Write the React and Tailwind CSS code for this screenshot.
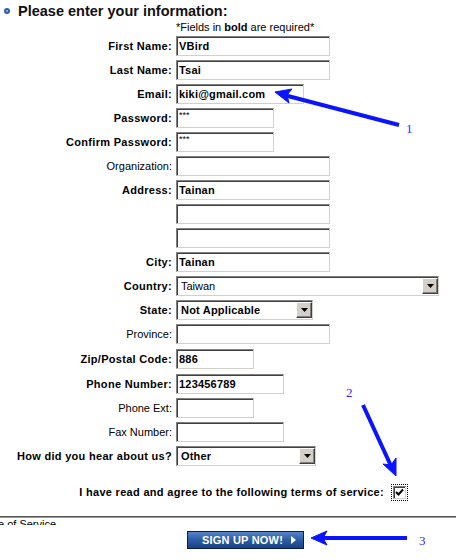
import React from 'react';

const inputBox =
  'h-[20px] border border-t-[#808080] border-l-[#808080] border-b-[#d4d0c8] border-r-[#d4d0c8] shadow-[inset_1px_1px_0_#404040] bg-white flex items-center overflow-hidden';

const Field = ({ w, value, bold = true, small = false }) => (
  <div className={`${inputBox} ${w}`}>
    {value && (
      <span
        className={`pl-[2px] text-black ${bold ? 'font-bold tracking-[0.2px]' : ''} ${small ? 'text-[9px] self-start leading-[12px]' : 'text-[11px]'}`}
      >
        {value}
      </span>
    )}
  </div>
);

const Select = ({ w, value, bold = true }) => (
  <div className={`${inputBox} ${w} justify-between`}>
    <span className={`pl-[4px] text-[11px] text-black ${bold ? 'font-bold tracking-[0.2px]' : ''}`}>{value}</span>
    <div className="w-[16px] h-[16px] bg-[#d4d0c8] border border-t-[#ffffff] border-l-[#ffffff] border-b-[#404040] border-r-[#404040] shadow-[inset_-1px_-1px_0_#808080] flex items-center justify-center">
      <svg width="7" height="4" viewBox="0 0 7 4">
        <polygon points="0,0 7,0 3.5,4" fill="#000" />
      </svg>
    </div>
  </div>
);

const Row = ({ label, bold = true, tall = false, children }) => (
  <div className={`flex items-center ${tall ? 'h-[26px]' : 'h-[24px]'}`}>
    <div className={`w-[172px] text-right text-[11px] text-black whitespace-nowrap ${bold ? 'font-bold tracking-[0.3px]' : ''}`}>{label}</div>
    <div className="ml-[4px]">{children}</div>
  </div>
);

const Arrows = () => (
  <svg className="absolute left-0 top-0 pointer-events-none" width="456" height="560" viewBox="0 0 456 560">
    <g fill="#0a14ff" stroke="#0a14ff">
      {/* arrow 1 */}
      <line x1="399" y1="125" x2="284" y2="95" strokeWidth="4" />
      <polygon points="275,92 292,89 287,95 289,103" strokeWidth="1" />
      {/* arrow 2 */}
      <line x1="363" y1="405" x2="391" y2="466" strokeWidth="4" />
      <polygon points="396,476 383,464 391,465 396,458" strokeWidth="1" />
      {/* arrow 3 */}
      <line x1="407" y1="538" x2="320" y2="538" strokeWidth="4" />
      <polygon points="311,538 327,531 323,538 327,545" strokeWidth="1" />
    </g>
    <g fill="#2a2aff" fontFamily="'Liberation Serif', 'Times New Roman', serif" fontSize="13">
      <text x="406" y="133">1</text>
      <text x="346" y="397">2</text>
      <text x="419" y="545">3</text>
    </g>
  </svg>
);

export default function App() {
  return (
    <div className="relative w-[456px] h-[560px] bg-white overflow-hidden font-['Liberation_Sans',Arial,sans-serif] text-black">
      <div className="flex items-center h-[21px] pt-[1px]">
        <div className="ml-[4px] w-[6px] h-[6px] rounded-full border-2 border-[#2c5da8] bg-[#9cc0ec]" />
        <span className="ml-[8px] text-[14.5px] font-bold leading-[20px] text-[#111]">Please enter your information:</span>
      </div>
      <div className="pl-[176px] text-[11px] leading-[13px]">
        *Fields in <span className="font-bold">bold</span> are required*
      </div>

      <div>
        <Row label="First Name:"><Field w="w-[154px]" value="VBird" /></Row>
        <Row label="Last Name:"><Field w="w-[154px]" value="Tsai" /></Row>
        <Row label="Email:"><Field w="w-[128px]" value="kiki@gmail.com" /></Row>
        <Row label="Password:"><Field w="w-[98px]" value="***" bold={false} small /></Row>
        <Row label="Confirm Password:"><Field w="w-[98px]" value="***" bold={false} small /></Row>
        <Row label="Organization:" bold={false}><Field w="w-[154px]" /></Row>
        <Row label="Address:"><Field w="w-[154px]" value="Tainan" /></Row>
        <Row label=""><Field w="w-[154px]" /></Row>
        <Row label=""><Field w="w-[154px]" /></Row>
        <Row label="City:"><Field w="w-[154px]" value="Tainan" /></Row>
        <Row label="Country:"><Select w="w-[263px]" value="Taiwan" bold={false} /></Row>
        <Row label="State:"><Select w="w-[137px]" value="Not Applicable" /></Row>
        <Row label="Province:" bold={false}><Field w="w-[154px]" /></Row>
        <Row label="Zip/Postal Code:" tall><Field w="w-[78px]" value="886" /></Row>
        <Row label="Phone Number:"><Field w="w-[108px]" value="123456789" /></Row>
        <Row label="Phone Ext:" bold={false}><Field w="w-[78px]" /></Row>
        <Row label="Fax Number:" bold={false}><Field w="w-[108px]" /></Row>
        <Row label="How did you hear about us?"><Select w="w-[140px]" value="Other" /></Row>
      </div>

      <div className="mt-[12px] h-[24px] flex items-center justify-end pr-[50px]">
        <span className="text-[11px] font-bold tracking-[0.3px]">I have read and agree to the following terms of service:</span>
        <div className="ml-[9px] outline outline-1 outline-dotted outline-black outline-offset-[1px]">
          <div className="w-[13px] h-[13px] bg-white border border-t-[#808080] border-l-[#808080] border-b-[#d4d0c8] border-r-[#d4d0c8] shadow-[inset_1px_1px_0_#404040] flex items-center justify-center">
            <svg width="9" height="9" viewBox="0 0 9 9">
              <polyline points="1,4 3.5,6.5 8,1.5" fill="none" stroke="#000" strokeWidth="2" />
            </svg>
          </div>
        </div>
      </div>

      <div className="mt-[12px] border-t border-b border-t-[#555] border-b-[#9a9a9a]" />
      <div className="h-[7px] overflow-hidden">
        <div className="-ml-[2px] text-[11px] leading-[12px] whitespace-nowrap">e of Service</div>
      </div>

      <div className="mt-[6px] pl-[187px]">
        <div className="w-[117px] h-[18px] border border-[#0b1f44] bg-gradient-to-b from-[#5584c8] via-[#2c5ca6] to-[#1a4286] flex items-center pl-[14px]">
          <span className="text-[11px] font-bold text-white tracking-[0.2px]">SIGN UP NOW!</span>
          <svg className="ml-[8px]" width="5" height="8" viewBox="0 0 5 8">
            <polygon points="0,0 5,4 0,8" fill="#fff" />
          </svg>
        </div>
      </div>

      <Arrows />
    </div>
  );
}
